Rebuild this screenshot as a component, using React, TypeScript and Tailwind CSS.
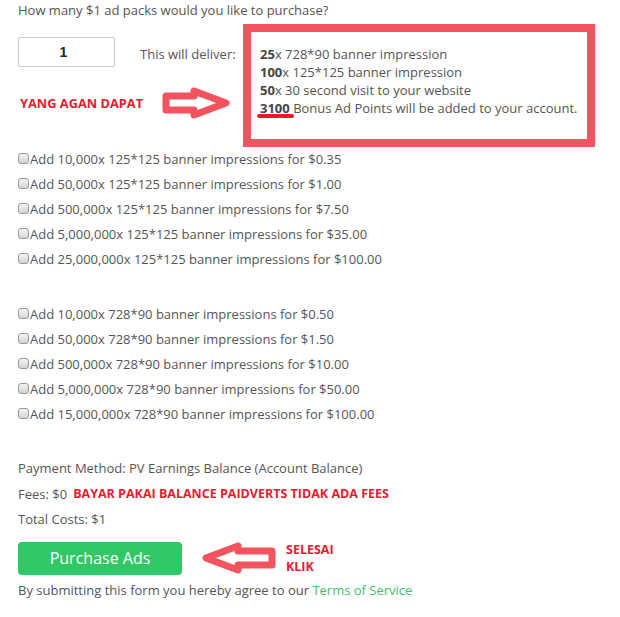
import React from "react";

const font = { fontFamily: '"Open Sans", "Liberation Sans", sans-serif' };

function RightArrow() {
  return (
    <svg width="72" height="34" viewBox="0 0 72 34" className="ml-[17px]">
      <path
        d="M6 10 H34 V5 L66 17 L34 29 V24 H6 Z"
        fill="#fff"
        stroke="#f2545f"
        strokeWidth="7"
        strokeLinejoin="round"
      />
    </svg>
  );
}

function LeftArrow() {
  return (
    <svg width="78" height="34" viewBox="0 0 78 34">
      <path
        d="M72 10 H38 V5 L6 17 L38 29 V24 H72 Z"
        fill="#fff"
        stroke="#f2545f"
        strokeWidth="7"
        strokeLinejoin="round"
      />
    </svg>
  );
}

function Check({ label }: { label: string }) {
  return (
    <div className="flex items-center h-[25px]">
      <span className="w-[11px] h-[11px] rounded-[3px] border border-[#9a9a9a] bg-gradient-to-b from-[#f4f4f4] to-[#d4d4d4] shrink-0 mr-[1px]" />
      <span>{label}</span>
    </div>
  );
}

const group1 = [
  "Add 10,000x 125*125 banner impressions for $0.35",
  "Add 50,000x 125*125 banner impressions for $1.00",
  "Add 500,000x 125*125 banner impressions for $7.50",
  "Add 5,000,000x 125*125 banner impressions for $35.00",
  "Add 25,000,000x 125*125 banner impressions for $100.00",
];
const group2 = [
  "Add 10,000x 728*90 banner impressions for $0.50",
  "Add 50,000x 728*90 banner impressions for $1.50",
  "Add 500,000x 728*90 banner impressions for $10.00",
  "Add 5,000,000x 728*90 banner impressions for $50.00",
  "Add 15,000,000x 728*90 banner impressions for $100.00",
];

export default function App() {
  return (
    <div
      className="w-[620px] h-[617px] bg-white pl-[18px] text-[13px] leading-[18px] text-[#555] overflow-hidden"
      style={font}
    >
      <div className="pt-[1px]">How many $1 ad packs would you like to purchase?</div>

      <div className="flex mt-[5px]">
        <div className="w-[225px] shrink-0">
          <div className="flex items-center mt-[13px]">
            <div className="w-[97px] h-[30px] border border-[#c8c8c8] rounded-[2px] flex items-center justify-center text-[14px] font-bold text-[#222]" style={{ fontFamily: '"Liberation Sans", Arial, sans-serif' }}>
              <span className="mr-[6px]">1</span>
            </div>
            <span className="ml-[25px] mt-[3px]">This will deliver:</span>
          </div>
          <div className="flex items-center mt-[19px]">
            <span className="ml-[2px] text-[12.8px] font-bold text-[#ea1a2f] w-[123px] whitespace-nowrap">YANG AGAN DAPAT</span>
            <RightArrow />
          </div>
        </div>
        <div className="w-[352px] h-[123px] border-[8px] border-[#f2545f] pl-[9px] pt-[13px]">
          <div><b className="text-[#444]">25</b>x 728*90 banner impression</div>
          <div><b className="text-[#444]">100</b>x 125*125 banner impression</div>
          <div><b className="text-[#444]">50</b>x 30 second visit to your website</div>
          <div>
            <span className="relative">
              <b className="text-[#444]">3100</b>
              <span className="absolute left-[-3px] right-[-4px] top-[15px] h-[4px] rounded-full bg-[#e8192c]" />
            </span>{" "}
            Bonus Ad Points will be added to your account.
          </div>
        </div>
      </div>

      <div className="mt-[-1px]">
        {group1.map((l) => (
          <Check key={l} label={l} />
        ))}
      </div>
      <div className="mt-[30px]">
        {group2.map((l) => (
          <Check key={l} label={l} />
        ))}
      </div>

      <div className="mt-[29px] flex flex-col">
        <div className="h-[25px] flex items-center">Payment Method: PV Earnings Balance (Account Balance)</div>
        <div className="h-[25px] mt-[1px] flex items-center">
          <span>Fees: $0</span>
          <span className="ml-[6px] text-[12.5px] font-bold text-[#ea1a2f] whitespace-nowrap">BAYAR PAKAI BALANCE PAIDVERTS TIDAK ADA FEES</span>
        </div>
        <div className="h-[25px] flex items-center">Total Costs: $1</div>
      </div>

      <div className="flex items-center mt-[10px]">
        <div className="w-[164px] h-[33px] rounded-[4px] bg-[#32c766] text-white text-[16px] flex items-center justify-center">
          Purchase Ads
        </div>
        <div className="ml-[18px]">
          <LeftArrow />
        </div>
        <div className="ml-[8px] text-[12.5px] font-bold text-[#ea1a2f] leading-[17px]">
          <div>SELESAI</div>
          <div>KLIK</div>
        </div>
      </div>

      <div className="mt-[6px]">
        By submitting this form you hereby agree to our{" "}
        <span className="text-[#3fbf6a]">Terms of Service</span>
      </div>
    </div>
  );
}
